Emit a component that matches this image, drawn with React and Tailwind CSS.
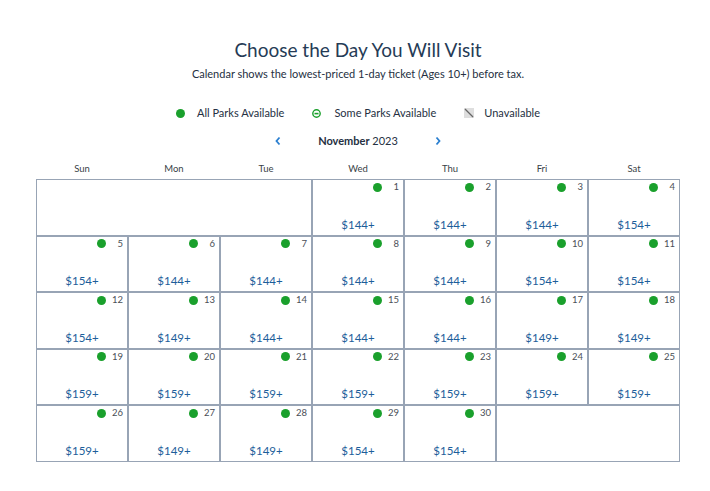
import React from "react";

const prices = {
  1: 144, 2: 144, 3: 144, 4: 154,
  5: 154, 6: 144, 7: 144, 8: 144, 9: 144, 10: 154, 11: 154,
  12: 154, 13: 149, 14: 144, 15: 144, 16: 144, 17: 149, 18: 149,
  19: 159, 20: 159, 21: 159, 22: 159, 23: 159, 24: 159, 25: 159,
  26: 159, 27: 149, 28: 149, 29: 154, 30: 154,
};

const days = ["Sun", "Mon", "Tue", "Wed", "Thu", "Fri", "Sat"];

function Dot() {
  return <span className="block w-[9px] h-[9px] rounded-full bg-[#1aa02c]" />;
}

function Cell({ d }) {
  return (
    <div className="border border-[#98a4b5] flex flex-col justify-between">
      <div className="flex justify-end items-center pt-[1px] pr-[4px] gap-[3px]">
        <Dot />
        <span className="w-[14px] text-right text-[9.5px] text-[#4a4f57] leading-[12px]">{d}</span>
      </div>
      <div className="text-center text-[11.5px] text-[#1d5e9a] leading-[14px] pb-[3px]">${prices[d]}+</div>
    </div>
  );
}

export default function App() {
  const cells = [];
  cells.push(<div key="e1" className="col-span-3 border border-[#98a4b5]" />);
  for (let d = 1; d <= 30; d++) cells.push(<Cell key={d} d={d} />);
  cells.push(<div key="e2" className="col-span-2 border border-[#98a4b5]" />);

  return (
    <div className="w-[710px] h-[491px] bg-white" style={{ fontFamily: "Lato, 'Noto Sans', sans-serif" }}>
      <div className="pl-[36px] w-[680px]">
        <div className="pt-[36px] text-center text-[19px] leading-[28px] text-[#253b56]">Choose the Day You Will Visit</div>
        <div className="mt-[2px] text-center text-[11px] leading-[16px] text-[#253042]">
          Calendar shows the lowest-priced 1-day ticket (Ages 10+) before tax.
        </div>
        <div className="mt-[23px] flex justify-center items-center text-[11px] leading-[16px] text-[#253042]">
          <div className="flex items-center">
            <span className="block w-[9px] h-[9px] rounded-full bg-[#1aa02c]" />
            <span className="ml-[12px]">All Parks Available</span>
          </div>
          <div className="flex items-center ml-[28px]">
            <svg width="9" height="9" viewBox="0 0 9 9">
              <circle cx="4.5" cy="4.5" r="3.7" fill="none" stroke="#1aa02c" strokeWidth="1.4" />
              <rect x="2.5" y="3.8" width="4" height="1.6" fill="#1aa02c" />
            </svg>
            <span className="ml-[13px]">Some Parks Available</span>
          </div>
          <div className="flex items-center ml-[28px]">
            <svg width="10" height="10" viewBox="0 0 10 10">
              <rect x="0" y="0" width="10" height="10" fill="#dedede" />
              <line x1="1" y1="1" x2="9" y2="9" stroke="#666" strokeWidth="1.2" />
            </svg>
            <span className="ml-[10px]">Unavailable</span>
          </div>
        </div>
        <div className="mt-[12px] flex justify-center items-center h-[16px]">
          <svg width="8" height="10" viewBox="0 0 8 10">
            <path d="M5.5 1.5 L2.5 5 L5.5 8.5" fill="none" stroke="#2a7fd0" strokeWidth="1.8" />
          </svg>
          <div className="mx-[36px] text-[11px] text-[#253042]">
            <span className="font-bold">November</span> 2023
          </div>
          <svg width="8" height="10" viewBox="0 0 8 10">
            <path d="M2.5 1.5 L5.5 5 L2.5 8.5" fill="none" stroke="#2a7fd0" strokeWidth="1.8" />
          </svg>
        </div>
        <div className="mt-[13px] grid grid-cols-7 text-[9.5px] leading-[14px] text-[#3a3f47]">
          {days.map((d) => (
            <div key={d} className="text-center">{d}</div>
          ))}
        </div>
        <div className="mt-[3px] grid grid-cols-7 grid-rows-5 w-[644px] h-[283px]">{cells}</div>
      </div>
    </div>
  );
}
